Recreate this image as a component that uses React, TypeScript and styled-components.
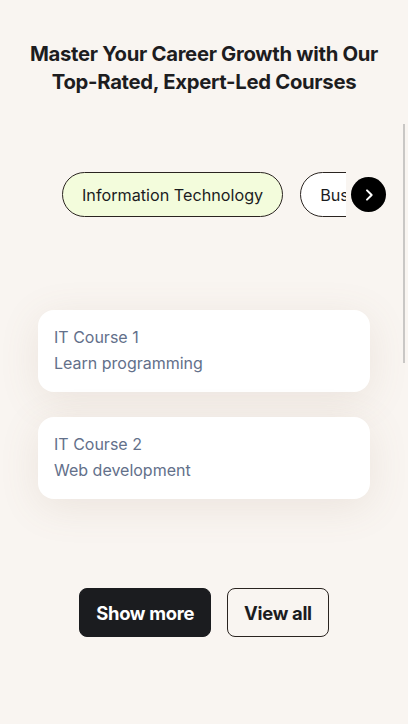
import React from 'react'
import styled, { createGlobalStyle } from 'styled-components'

const GlobalStyle = createGlobalStyle`
  html, body {
    margin: 0;
    padding: 0;
    background: #f9f5f1;
  }
  body {
    font-family: Inter, "Noto Sans", sans-serif;
    color: #1b1c1f;
  }
`

const Page = styled.main`
  position: relative;
  width: 408px;
  min-height: 724px;
  background: #f9f5f1;
  overflow: hidden;
  padding-top: 40px;
  box-sizing: border-box;
`

const Heading = styled.h1`
  margin: 0 auto;
  width: 370px;
  text-align: center;
  font-size: 20.3px;
  line-height: 28px;
  font-weight: 700;
  letter-spacing: -0.3px;
  color: #1d1d1f;
`

const TabBar = styled.div`
  display: flex;
  align-items: center;
  gap: 5px;
  margin-top: 76px;
  padding-left: 62px;
`

const TabViewport = styled.div`
  width: 284px;
  overflow: hidden;
  display: flex;
  gap: 17px;
`

const Tab = styled.button<{ $active?: boolean }>`
  flex: none;
  height: 45px;
  padding: 0 19px;
  border-radius: 23px;
  border: 1px solid #2a2420;
  background: ${(p) => (p.$active ? '#f3fcdc' : '#ffffff')};
  font-family: Inter, "Noto Sans", sans-serif;
  font-size: 16.2px;
  letter-spacing: 0;
  color: #1b1c1f;
  cursor: pointer;
`

const ArrowButton = styled.button`
  flex: none;
  width: 35px;
  height: 35px;
  border-radius: 50%;
  border: none;
  background: #000;
  color: #fff;
  display: flex;
  align-items: center;
  justify-content: center;
  padding: 0;
  cursor: pointer;
`

const SideRail = styled.div`
  position: absolute;
  right: 3px;
  top: 124px;
  width: 2px;
  height: 239px;
  background: #c9c7c5;
`

const CardList = styled.section`
  display: flex;
  flex-direction: column;
  gap: 25px;
  width: 332px;
  margin: 93px auto 0;
`

const Card = styled.article`
  background: #fff;
  border-radius: 16px;
  height: 82px;
  box-sizing: border-box;
  padding: 14px 16px;
  box-shadow: 0 8px 40px rgba(140, 110, 80, 0.12);
  color: #63708a;
  font-size: 16px;
  line-height: 26px;
  letter-spacing: 0;
`

const CardTitle = styled.div``
const CardText = styled.div``

const Actions = styled.div`
  display: flex;
  justify-content: center;
  gap: 16px;
  margin-top: 89px;
`

const ActionButton = styled.button<{ $primary?: boolean }>`
  height: 49px;
  padding: 0 16px;
  border-radius: 8px;
  border: 1px solid ${(p) => (p.$primary ? '#1b1c1f' : '#2a2420')};
  background: ${(p) => (p.$primary ? '#1b1c1f' : 'transparent')};
  color: ${(p) => (p.$primary ? '#fff' : '#1b1c1f')};
  font-family: Inter, "Noto Sans", sans-serif;
  font-weight: 700;
  font-size: 18.4px;
  letter-spacing: -0.3px;
  cursor: pointer;
`

const courses = [
  { title: 'IT Course 1', text: 'Learn programming' },
  { title: 'IT Course 2', text: 'Web development' },
]

const App = () => {
  return (
    <Page>
      <GlobalStyle />
      <Heading>Master Your Career Growth with Our Top-Rated, Expert-Led Courses</Heading>

      <TabBar>
        <TabViewport>
          <Tab $active>Information Technology</Tab>
          <Tab>Business</Tab>
        </TabViewport>
        <ArrowButton aria-label="Next">
          <svg width="16" height="16" viewBox="0 0 24 24" fill="none" stroke="#fff" strokeWidth="3" strokeLinecap="round" strokeLinejoin="round">
            <path d="M9 5l7 7-7 7" />
          </svg>
        </ArrowButton>
      </TabBar>
      <SideRail />

      <CardList>
        {courses.map((c) => (
          <Card key={c.title}>
            <CardTitle>{c.title}</CardTitle>
            <CardText>{c.text}</CardText>
          </Card>
        ))}
      </CardList>

      <Actions>
        <ActionButton $primary>Show more</ActionButton>
        <ActionButton>View all</ActionButton>
      </Actions>
    </Page>
  )
}

export default App
